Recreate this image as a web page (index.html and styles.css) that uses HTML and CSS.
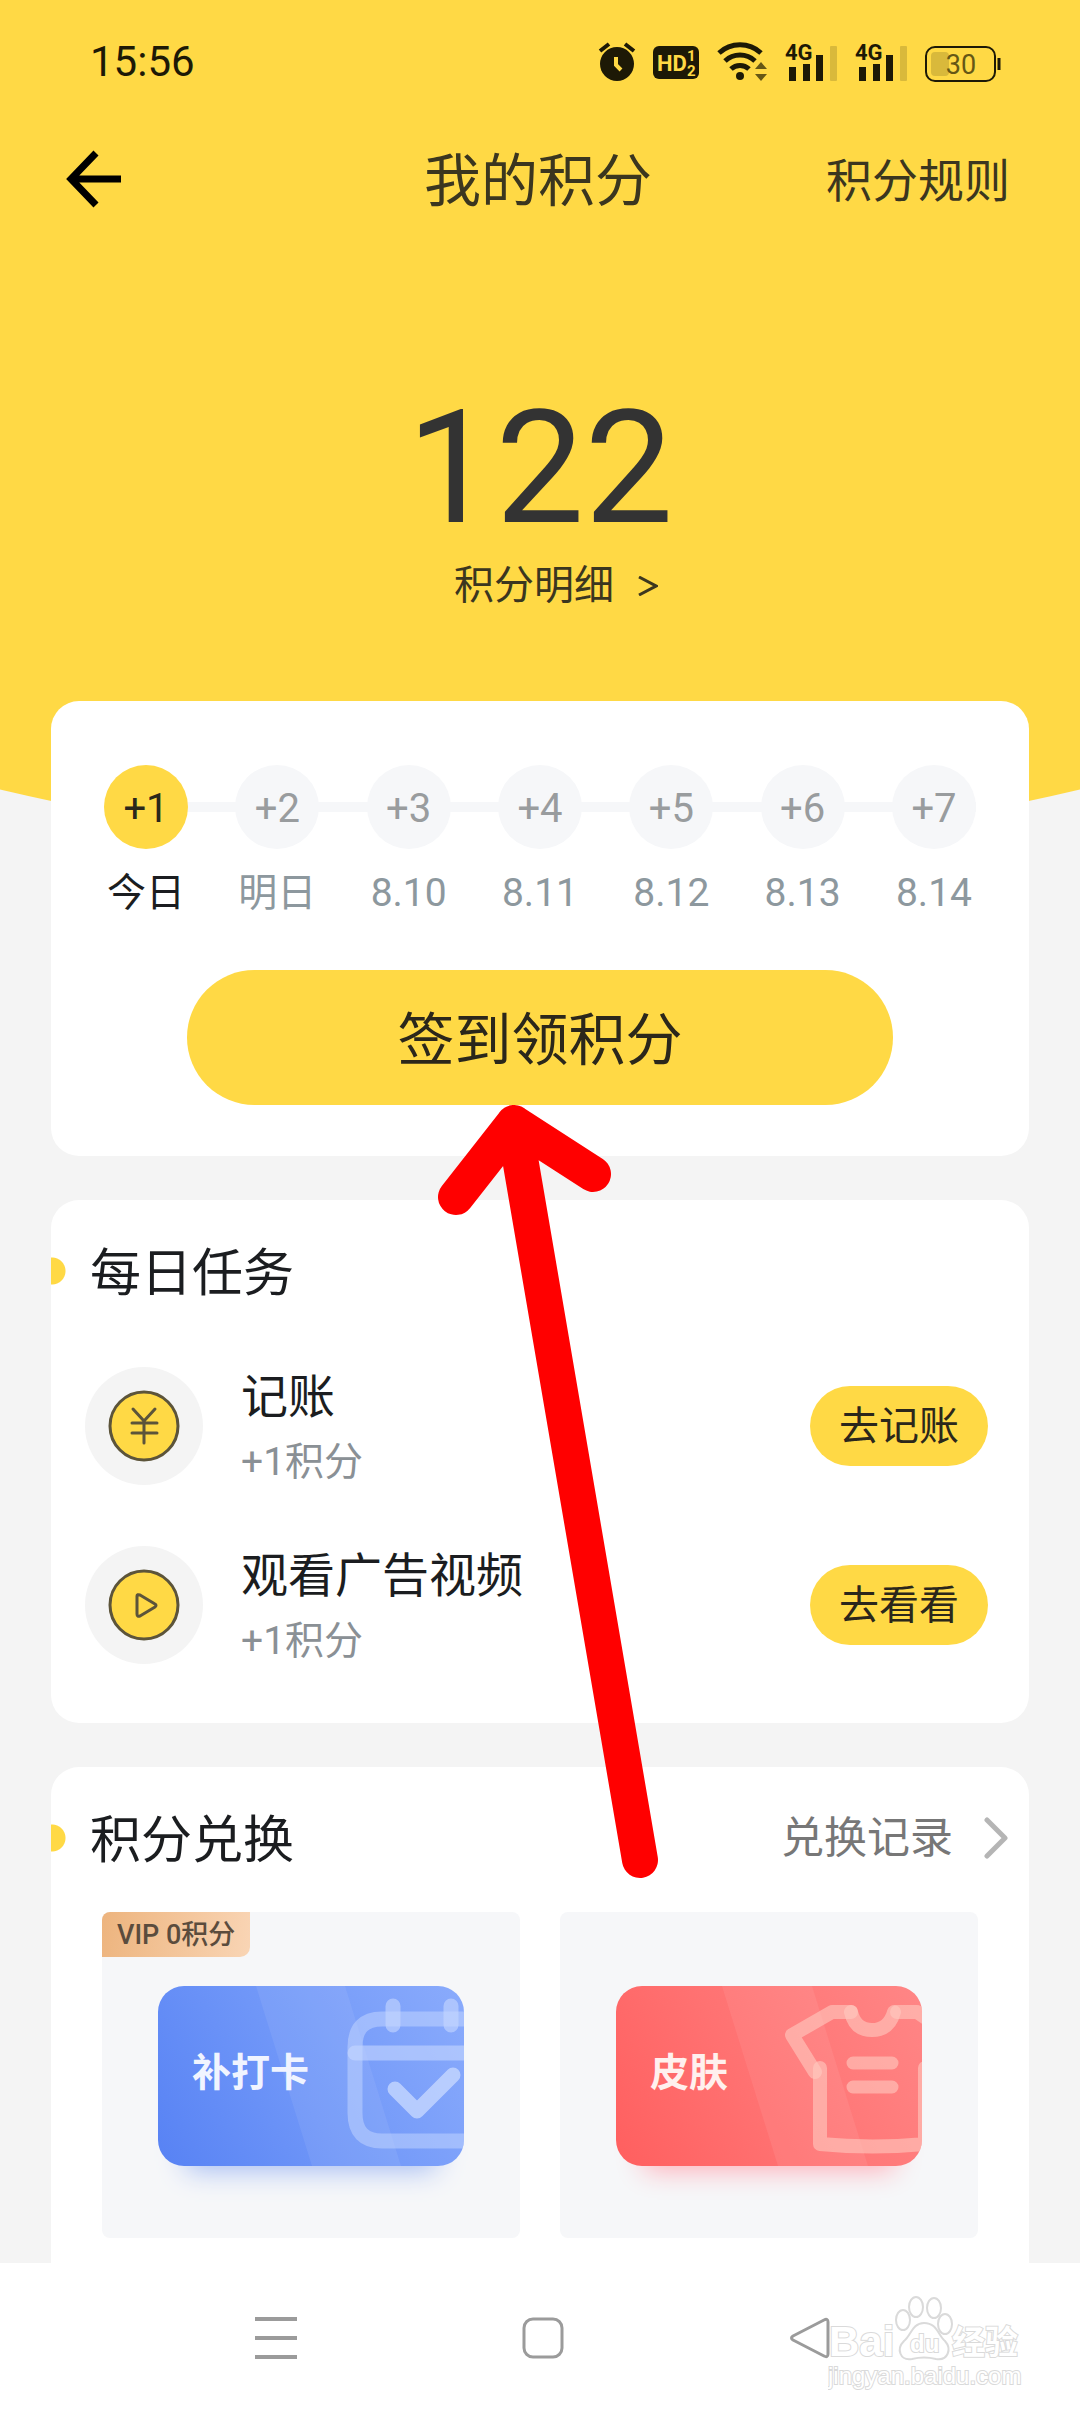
FILE: index.html
```html
<!DOCTYPE html>
<html lang="zh-CN">
<head>
<meta charset="utf-8">
<meta name="viewport" content="width=device-width, initial-scale=1">
<title>我的积分</title>
<link rel="stylesheet" href="styles.css">
</head>
<body>
<div class="page">
  <header class="hero">
    <div class="status">
      <time class="clock">15:56</time>
      <div class="status-icons">
        <svg width="36" height="40" viewBox="0 0 36 40" aria-label="闹钟">
          <circle cx="18" cy="22" r="17" fill="#1d1906"/>
          <path d="M1 9 10 2M35 9 26 2" stroke="#1d1906" stroke-width="4"/>
          <path d="M17 15v8l5 5" fill="none" stroke="#ffd945" stroke-width="4"/>
        </svg>
        <svg width="46" height="40" viewBox="0 0 46 40" aria-label="HD">
          <rect y="4" width="46" height="33" rx="6" fill="#1d1906"/>
          <text class="hd" x="4" y="29">HD</text>
          <text class="hd-small" x="34" y="19">1</text>
          <text class="hd-small" x="34" y="34">2</text>
        </svg>
        <svg width="50" height="40" viewBox="0 0 50 40" aria-label="WLAN">
          <g fill="none" stroke="#1d1906" stroke-width="5">
            <path d="M2 11a31 31 0 0 1 42 0"/>
            <path d="M8 19a22 22 0 0 1 30 0"/>
            <path d="M14 27a13 13 0 0 1 18 0"/>
          </g>
          <circle cx="23" cy="34" r="4" fill="#1d1906"/>
          <path d="m38 27 6-7 6 7zM38 32l6 7 6-7z" fill="#665715"/>
        </svg>
        <svg width="52" height="40" viewBox="0 0 52 40" aria-label="4G">
          <text class="net" x="0" y="18">4G</text>
          <path d="M4 25h7v14H4zM18 22h7v17h-7zM31 13h7v26h-7z" fill="#1d1906"/>
          <rect x="45" y="4" width="7" height="35" rx="1" fill="#d9b93b"/>
        </svg>
        <svg width="52" height="40" viewBox="0 0 52 40" aria-label="4G">
          <text class="net" x="0" y="18">4G</text>
          <path d="M4 25h7v14H4zM18 22h7v17h-7zM31 13h7v26h-7z" fill="#1d1906"/>
          <rect x="45" y="4" width="7" height="35" rx="1" fill="#d9b93b"/>
        </svg>
        <svg width="76" height="40" viewBox="0 0 76 40" aria-label="电量 30">
          <rect x="1" y="5" width="69" height="34" rx="9" fill="none" stroke="#1d1906" stroke-width="2"/>
          <rect x="6" y="10" width="18" height="24" rx="4" fill="#d9b93b"/>
          <path d="M74 16v12" stroke="#1d1906" stroke-width="3"/>
          <text class="battery" x="36" y="32" text-anchor="middle">30</text>
        </svg>
      </div>
    </div>
    <nav class="titlebar">
      <button class="back" type="button" aria-label="返回">
        <svg width="56" height="60" viewBox="0 0 56 60" fill="none" stroke="#000" stroke-width="7"><path d="M4 30h51M30 4 5 30l25 26"/></svg>
      </button>
      <h1>我的积分</h1>
      <a class="rules" href="#rules">积分规则</a>
    </nav>
    <div class="total">
      <strong>122</strong>
      <a href="#detail">积分明细
        <svg width="20" height="20" viewBox="0 0 20 20" fill="none" stroke="#3d371f" stroke-width="3"><path d="m1 1 17 9-17 9"/></svg>
      </a>
    </div>
  </header>

  <main class="content">
    <section class="card checkin">
      <ol class="days">
        <li class="today"><span>+1</span>今日</li>
        <li><span>+2</span>明日</li>
        <li><span>+3</span>8.10</li>
        <li><span>+4</span>8.11</li>
        <li><span>+5</span>8.12</li>
        <li><span>+6</span>8.13</li>
        <li><span>+7</span>8.14</li>
      </ol>
      <button class="sign" type="button">签到领积分</button>
    </section>

    <section class="card tasks">
      <div class="card-head"><h2>每日任务</h2></div>
      <ul class="task-list">
        <li>
          <span class="task-icon">
            <svg width="72" height="72" viewBox="0 0 72 72" fill="none" stroke="#5c543a" stroke-width="3" stroke-linecap="round" stroke-linejoin="round"><circle cx="36" cy="36" r="34" fill="#ffd945"/><path d="m25 19 11 12 11-12M36 31v22M24 33h25M24 43h25"/></svg>
          </span>
          <div class="task-text"><h3>记账</h3><p>+1积分</p></div>
          <button type="button">去记账</button>
        </li>
        <li>
          <span class="task-icon">
            <svg width="72" height="72" viewBox="0 0 72 72" fill="none" stroke="#5c543a" stroke-width="3" stroke-linecap="round" stroke-linejoin="round"><circle cx="36" cy="36" r="34" fill="#ffd945"/><path d="M29 27v18q0 3 3 2l15-9q2-2 0-3l-15-9q-3-1-3 1z"/></svg>
          </span>
          <div class="task-text"><h3>观看广告视频</h3><p>+1积分</p></div>
          <button type="button">去看看</button>
        </li>
      </ul>
    </section>

    <section class="card exchange">
      <div class="card-head">
        <h2>积分兑换</h2>
        <a href="#records">兑换记录
          <svg width="26" height="42" viewBox="0 0 26 42" fill="none" stroke="#b5b5b5" stroke-width="5" stroke-linecap="round" stroke-linejoin="round"><path d="m4 3 18 18L4 39"/></svg>
        </a>
      </div>
      <div class="goods">
        <a class="tile" href="#makeup">
          <span class="vip">VIP 0积分</span>
          <div class="ticket blue">
            <svg viewBox="0 0 306 180" aria-hidden="true">
              <path d="M98 0h89l56 180h-89z" fill="#fff" fill-opacity=".07"/>
              <g fill="none" stroke="#c6d7ff" stroke-opacity=".6" stroke-width="15" stroke-linecap="round">
                <path d="M320 33H224q-27 0-27 28v66q0 28 27 28h96" stroke-opacity=".5"/>
                <path d="M197 67h120"/>
                <path d="M235 20v19M293 20v19"/>
                <path d="m237 103 22 22 36-36" stroke-linejoin="round" stroke-opacity=".8"/>
              </g>
            </svg>
            <b>补打卡</b>
          </div>
        </a>
        <a class="tile" href="#skin">
          <div class="ticket red">
            <svg viewBox="0 0 306 180" aria-hidden="true">
              <path d="M106 0h90l56 180h-90z" fill="#fff" fill-opacity=".07"/>
              <g fill="none" stroke="#ffc9c0" stroke-opacity=".6" stroke-width="14" stroke-linecap="round" stroke-linejoin="round">
                <path d="M199 86 176 49l40-23h19M281 26h20l30 20"/>
                <path d="M235 26q4 18 21 18t22-18"/>
                <path d="M204 82v76q53 5 105 0V82"/>
                <path d="M237 77h39M237 101h39" stroke-width="13"/>
              </g>
            </svg>
            <b>皮肤</b>
          </div>
        </a>
      </div>
    </section>
  </main>

  <nav class="sysbar">
    <button type="button" aria-label="最近任务"><svg width="42" height="42" viewBox="0 0 42 42" stroke="#9b9b9b" stroke-width="4"><path d="M0 2h42M0 21h42M0 40h42"/></svg></button>
    <button type="button" aria-label="主屏幕"><svg width="42" height="42" viewBox="0 0 42 42" fill="none" stroke="#9b9b9b" stroke-width="3"><rect x="2" y="2" width="38" height="38" rx="9"/></svg></button>
    <button type="button" aria-label="返回"><svg width="42" height="42" viewBox="0 0 42 42" fill="none" stroke="#9b9b9b" stroke-width="3" stroke-linejoin="round"><path d="M35 3 4 19q-3 2 0 4l31 16q4 2 4-2V5q0-4-4-2z"/></svg></button>
    <svg class="watermark" width="196" height="98" viewBox="0 0 196 98">
      <text class="wm-brand" x="1" y="60">Bai</text>
      <g fill="#fff" stroke="#dadada" stroke-width="2">
        <ellipse cx="75" cy="24" rx="7" ry="10"/>
        <ellipse cx="88" cy="11" rx="7" ry="10"/>
        <ellipse cx="106" cy="12" rx="7" ry="10"/>
        <ellipse cx="117" cy="28" rx="7" ry="10"/>
        <path d="M96 27c-12 0-13 13-20 18-8 8-4 20 8 18 8-2 16-2 24 0 12 2 16-10 9-18-7-6-8-18-21-18z"/>
      </g>
      <text class="wm-du" x="82" y="56">du</text>
      <text class="wm-cn" x="124" y="58">经验</text>
      <text class="wm-url" x="0" y="88">jingyan.baidu.com</text>
    </svg>
  </nav>

  <svg class="pointer" width="184" height="776" viewBox="0 0 184 776" fill="none" stroke="#f00" stroke-width="36" stroke-linecap="round" stroke-linejoin="round" aria-hidden="true">
    <path d="M18 92 76 18l79 51M76 18l126 737" />
  </svg>
</div>
</body>
</html>
```
FILE: styles.css
```css
* { box-sizing: border-box; }

body, h1, h2, h3, p, ol, ul { margin: 0; padding: 0; }

body {
  background: #f4f4f4;
  color: #1b1d20;
  font-family: Roboto, "Noto Sans CJK SC", sans-serif;
}

ol, ul { list-style: none; }
a { color: inherit; text-decoration: none; }
svg { display: block; }
h1, h2, h3 { font-weight: 400; }

button {
  padding: 0;
  border: 0;
  background: none;
  color: #2b271b;
  font: inherit;
}

.page {
  position: relative;
  display: flex;
  flex-direction: column;
  min-height: 100vh;
  overflow: hidden;
}

/* Yellow header with a curved lower edge */
.hero {
  padding-bottom: 234px;
  background: #ffd945;
  color: #3b361f;
  clip-path: ellipse(134% 100% at 50% 0);
}

.status {
  display: flex;
  align-items: center;
  justify-content: space-between;
  height: 124px;
  padding: 0 79px 0 90px;
}

.clock {
  color: #1d1906;
  font-size: 42px;
  line-height: 48px;
}

.status-icons { display: flex; gap: 18px; }
.status-icons svg { overflow: visible; }

.hd { fill: #ffd945; font: 700 22px Roboto, sans-serif; }
.hd-small { fill: #ffd945; font: 700 15px Roboto, sans-serif; }
.net { fill: #1d1906; font: 700 22px Roboto, sans-serif; }
.battery { fill: #665715; font: 27px Roboto, sans-serif; }

.titlebar {
  display: grid;
  grid-template-columns: 1fr auto 1fr;
  align-items: center;
  height: 110px;
  padding: 0 70px 0 66px;
}

.titlebar h1 { padding-top: 6px; font-size: 57px; line-height: 80px; }
.back { justify-self: start; }
.rules { justify-self: end; padding-top: 4px; font-size: 46px; line-height: 64px; }

.total {
  display: flex;
  flex-direction: column;
  align-items: center;
  padding-top: 148px;
}

.total strong {
  color: #333;
  font-size: 158px;
  font-weight: 400;
  line-height: 172px;
}

.total a {
  display: flex;
  align-items: center;
  gap: 24px;
  padding-left: 32px;
  font-size: 40px;
  line-height: 63px;
}

.content {
  display: flex;
  flex: 1;
  flex-direction: column;
  gap: 44px;
  margin-top: -150px;
  padding: 0 51px;
}

.card {
  position: relative;
  border-radius: 28px;
  background: #fff;
}

.checkin { padding: 64px 53px 51px; }

/* The grey band runs behind the circles and links them */
.days {
  display: flex;
  justify-content: space-between;
  background: linear-gradient(#f6f7f9, #f6f7f9) no-repeat 0 37px / 100% 10px;
}

.days li {
  display: flex;
  flex-direction: column;
  align-items: center;
  gap: 18px;
  width: 84px;
  color: #8d989e;
  font-size: 39px;
  line-height: 52px;
}

.days span {
  width: 84px;
  padding-top: 4px;
  border-radius: 50%;
  background: #f6f7f9;
  color: #999c9e;
  font-size: 40px;
  line-height: 80px;
  text-align: center;
}

.days .today { color: #1b1d20; }
.days .today span { background: #ffd945; color: #2b271b; }

.sign {
  display: block;
  width: 81%;
  margin: 51px auto 0;
  padding-top: 6px;
  border-radius: 68px;
  background: #ffd945;
  font-size: 57px;
  line-height: 129px;
}

.card-head {
  display: flex;
  align-items: center;
  justify-content: space-between;
  padding: 0 20px 0 39px;
  background: radial-gradient(circle at 1px 50%, #ffd945 13px, transparent 14px);
}

.card-head h2 { padding-top: 6px; font-size: 51px; line-height: 66px; }

.card-head a {
  display: flex;
  align-items: center;
  gap: 30px;
  color: #777;
  font-size: 43px;
  line-height: 60px;
}

.tasks { padding: 35px 0 59px; }

.task-list {
  display: flex;
  flex-direction: column;
  gap: 61px;
  padding: 60px 41px 0 34px;
}

.task-list li { display: flex; align-items: center; height: 118px; }

.task-icon {
  display: grid;
  place-items: center;
  width: 118px;
  height: 118px;
  border-radius: 50%;
  background: #f4f4f4;
}

.task-text { flex: 1; padding: 4px 0 0 38px; }
.task-text h3 { font-size: 47px; line-height: 68px; }
.task-text p { color: #8a9095; font-size: 39px; line-height: 62px; }

.task-list button {
  padding: 2px 29px 0;
  border-radius: 40px;
  background: #ffd945;
  font-size: 40px;
  line-height: 78px;
}

.exchange {
  flex: 1;
  padding: 35px 0 25px;
  border-radius: 28px 28px 0 0;
}

.goods {
  display: grid;
  grid-template-columns: 1fr 1fr;
  gap: 40px;
  padding: 38px 51px 0;
}

.tile {
  position: relative;
  padding: 74px 56px 72px;
  border-radius: 8px;
  background: #f6f7f9;
}

.vip {
  position: absolute;
  top: 0;
  left: 0;
  padding: 2px 15px 0;
  border-radius: 8px 0 10px 0;
  background: linear-gradient(100deg, #edb47e, #f9d5b5);
  color: #5b4c3d;
  font-size: 27px;
  font-weight: 500;
  line-height: 43px;
}

.ticket {
  display: grid;
  align-items: center;
  border-radius: 26px;
}

.ticket svg, .ticket b { grid-area: 1 / 1; }
.ticket svg { width: 100%; border-radius: 26px; }
.ticket b {
  padding: 0 0 6px 34px;
  color: #f0f4ff;
  font-size: 39px;
  line-height: 56px;
}

.blue {
  background: linear-gradient(60deg, #5782f4, #6f96f8 45%, #8aabfc);
  box-shadow: 0 32px 26px -28px #a2baf2;
}

.red {
  background: linear-gradient(60deg, #ff5f5f, #ff7272 45%, #ff8686);
  box-shadow: 0 32px 26px -28px #ffacb6;
}

.red b { color: #fff0ee; }

/* Phone navigation keys */
.sysbar {
  position: relative;
  display: flex;
  justify-content: space-between;
  height: 149px;
  padding: 0 249px 0 255px;
  background: #fff;
}

.watermark {
  position: absolute;
  right: 56px;
  bottom: 18px;
}

.watermark text {
  fill: #fff;
  stroke: #dadada;
  stroke-width: 2px;
  paint-order: stroke;
}

.wm-brand { font: 700 42px "Liberation Sans", sans-serif; }
.wm-du { font: 700 24px "Liberation Sans", sans-serif; }
.wm-cn { font: 700 33px "Noto Sans CJK SC", sans-serif; }
.wm-url { font: 24px "Liberation Sans", sans-serif; }

/* Red arrow drawn over the cards, aimed at the sign-in button */
.pointer {
  position: absolute;
  top: 1105px;
  left: calc(50% - 102px);
  overflow: visible;
}
```
